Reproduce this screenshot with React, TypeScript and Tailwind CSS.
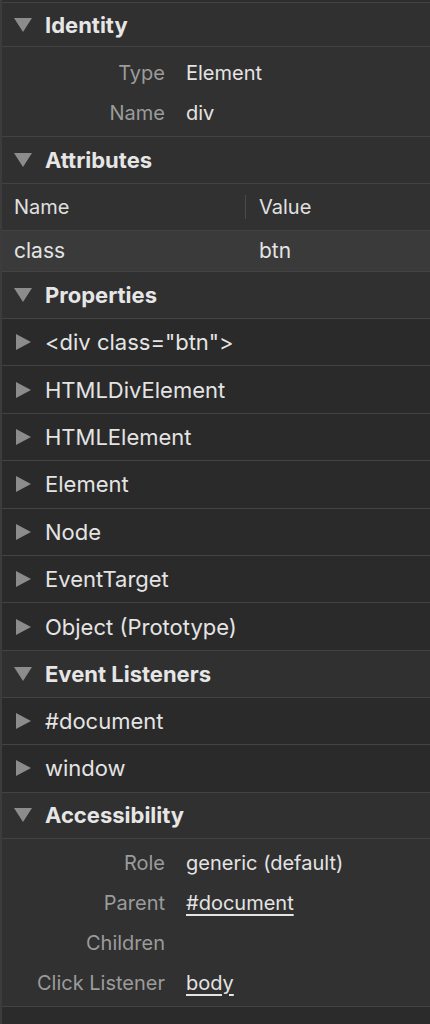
import React from "react";

const font = { fontFamily: "Inter, 'Noto Sans', sans-serif" };

function Down() {
  return (
    <svg width="18" height="14" viewBox="0 0 18 14" className="shrink-0">
      <path d="M0 0 H18 L9 14 Z" fill="#8c8c8c" />
    </svg>
  );
}

function Right() {
  return (
    <svg width="15" height="16" viewBox="0 0 15 16" className="shrink-0">
      <path d="M0 0 L15 8 L0 16 Z" fill="#8c8c8c" />
    </svg>
  );
}

function Header({ label, h = "h-[47px]" }: { label: string; h?: string }) {
  return (
    <div className={"flex items-center gap-[13px] border-b border-[#434343] bg-[#303030] pl-[12px] " + h}>
      <Down />
      <span className="text-[22px] font-bold leading-none text-[#e6e6e6]">{label}</span>
    </div>
  );
}

function TreeRow({ label }: { label: string }) {
  return (
    <div className="flex h-[47.4px] items-center gap-[14px] border-b border-[#434343] bg-[#2a2a2a] pl-[14px]">
      <Right />
      <span className="text-[22px] leading-none text-[#e4e4e4]">{label}</span>
    </div>
  );
}

function KeyRow({ k, v, link }: { k: string; v?: string; link?: boolean }) {
  return (
    <div className="flex h-[40px] items-center text-[20px]">
      <span className="w-[163px] shrink-0 text-right text-[#9b9b9b]">{k}</span>
      {v && (
        <span
          className={
            "ml-[21px] text-[#e4e4e4] " +
            (link ? "underline decoration-[1.5px] underline-offset-[4px]" : "")
          }
        >
          {v}
        </span>
      )}
    </div>
  );
}

export default function App() {
  return (
    <div style={font} className="h-[1024px] w-[430px] overflow-hidden border-l-2 border-[#3c3c3c] bg-[#2b2b2b]">
      <div className="h-[3px] border-b border-[#434343] bg-[#2e2e2e]" />
      <Header label="Identity" h="h-[44px]" />
      <div className="border-b border-[#434343] bg-[#313131] pb-[3px] pt-[6px]">
        <KeyRow k="Type" v="Element" />
        <KeyRow k="Name" v="div" />
      </div>
      <Header label="Attributes" />
      <div className="flex h-[47px] items-center border-b border-[#434343] bg-[#313131] text-[20px] text-[#e0e0e0]">
        <span className="w-[243px] pl-[12px]">Name</span>
        <span className="h-[24px] w-px bg-[#4a4a4a]" />
        <span className="pl-[13px]">Value</span>
      </div>
      <div className="flex h-[41px] items-center border-b border-[#434343] bg-[#3a3a3a] text-[21px] text-[#e4e4e4]">
        <span className="w-[244px] pl-[12px]">class</span>
        <span className="pl-[13px]">btn</span>
      </div>
      <Header label="Properties" />
      <TreeRow label='<div class="btn">' />
      <TreeRow label="HTMLDivElement" />
      <TreeRow label="HTMLElement" />
      <TreeRow label="Element" />
      <TreeRow label="Node" />
      <TreeRow label="EventTarget" />
      <TreeRow label="Object (Prototype)" />
      <Header label="Event Listeners" />
      <TreeRow label="#document" />
      <TreeRow label="window" />
      <Header label="Accessibility" h="h-[46px]" />
      <div className="border-b border-[#434343] bg-[#313131] pb-[3px] pt-[4px]">
        <KeyRow k="Role" v="generic (default)" />
        <KeyRow k="Parent" v="#document" link />
        <KeyRow k="Children" />
        <KeyRow k="Click Listener" v="body" link />
      </div>
    </div>
  );
}
